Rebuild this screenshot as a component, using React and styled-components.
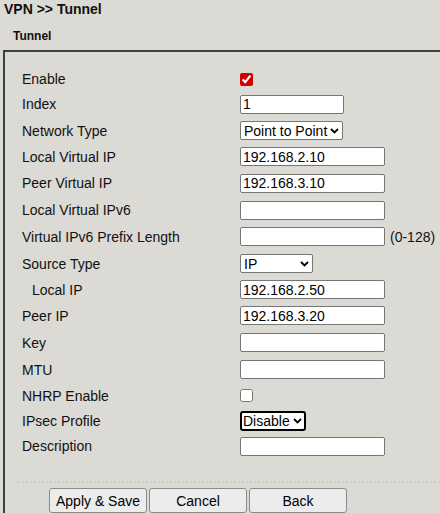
import React from 'react';
import styled, { createGlobalStyle } from 'styled-components';

const GlobalStyle = createGlobalStyle`
  html, body {
    margin: 0;
    padding: 0;
    background: #dcdad5;
  }
  body {
    font-family: "Liberation Sans", Arial, sans-serif;
    font-size: 14px;
    color: #111;
  }
`;

const Page = styled.div`
  width: 440px;
  height: 513px;
  overflow: hidden;
  background: #dcdad5;
`;

const Crumb = styled.div`
  font-weight: bold;
  font-size: 14px;
  padding: 1px 0 0 4px;
  height: 25px;
`;

const SectionTitle = styled.div`
  font-weight: bold;
  font-size: 12px;
  padding-left: 13px;
  height: 24px;
  line-height: 21px;
`;

const Panel = styled.div`
  margin-left: 3px;
  border-top: 2px solid #3f3f3f;
  border-left: 2px solid #3f3f3f;
  padding: 15px 0 0 17px;
  height: 470px;
`;

const Form = styled.div`
  display: flex;
  flex-direction: column;
`;

const Row = styled.div`
  display: grid;
  grid-template-columns: 218px 1fr;
  align-items: center;
  height: ${p => p.h}px;
`;

const Label = styled.div`
  padding-left: ${p => (p.indent ? 10 : 0)}px;
`;

const Field = styled.div`
  display: flex;
  align-items: center;
  gap: 5px;
`;

const TextInput = styled.input`
  box-sizing: border-box;
  width: ${p => p.w || 145}px;
  height: 19px;
  margin: 0;
  padding: 0 2px;
  border: 1px solid #767676;
  border-radius: 2px;
  background: #fff;
  font-family: "Liberation Sans", Arial, sans-serif;
  font-size: 14px;
  color: #000;
`;

const SelectWrap = styled.div`
  position: relative;
  display: inline-flex;
`;

const Select = styled.select`
  appearance: none;
  box-sizing: border-box;
  width: ${p => p.w}px;
  height: ${p => (p.focused ? 20 : 19)}px;
  margin: 0;
  padding: 0 14px 0 ${p => (p.focused ? 1 : 3)}px;
  border: ${p => (p.focused ? '2px solid #000' : '1px solid #767676')};
  border-radius: ${p => (p.focused ? 3 : 2)}px;
  background: #fff;
  font-family: "Liberation Sans", Arial, sans-serif;
  font-size: 14px;
  color: #000;
`;

const Chevron = styled.svg`
  position: absolute;
  right: 4px;
  top: 50%;
  margin-top: -3px;
  width: 9px;
  height: 6px;
  pointer-events: none;
`;

const Dropdown = ({ w, focused, value, options }) => (
  <SelectWrap>
    <Select w={w} focused={focused} defaultValue={value}>
      {options.map(o => (
        <option key={o} value={o}>{o}</option>
      ))}
    </Select>
    <Chevron viewBox="0 0 9 6">
      <path d="M1 1 L4.5 4.5 L8 1" fill="none" stroke="#000" strokeWidth="1.8" />
    </Chevron>
  </SelectWrap>
);

const Check = styled.input`
  width: 13px;
  height: 13px;
  margin: 0;
  accent-color: #d40000;
`;

const Hint = styled.span`
  color: #111;
`;

const Divider = styled.div`
  margin: 22px 0 5px -5px;
  border-top: 2px dotted #cfcdc9;
`;

const Buttons = styled.div`
  display: flex;
  gap: 2px;
  padding-left: 27px;
`;

const Button = styled.button`
  box-sizing: border-box;
  width: 98px;
  height: 25px;
  margin: 0;
  padding: 0;
  white-space: nowrap;
  border: 1px solid #8a8a8a;
  border-radius: 3px;
  background: #ececec;
  font-family: "Liberation Sans", Arial, sans-serif;
  font-size: 14px;
  color: #000;
`;

export default function App() {
  return (
    <Page>
      <GlobalStyle />
      <Crumb>VPN &gt;&gt; Tunnel</Crumb>
      <SectionTitle>Tunnel</SectionTitle>
      <Panel>
        <Form>
          <Row h={24}>
            <Label>Enable</Label>
            <Field><Check type="checkbox" defaultChecked /></Field>
          </Row>
          <Row h={26}>
            <Label>Index</Label>
            <Field><TextInput w={104} defaultValue="1" /></Field>
          </Row>
          <Row h={27}>
            <Label>Network Type</Label>
            <Field>
              <Dropdown w={103} value="Point to Point" options={['Point to Point', 'Point to Multipoint']} />
            </Field>
          </Row>
          <Row h={25}>
            <Label>Local Virtual IP</Label>
            <Field><TextInput defaultValue="192.168.2.10" /></Field>
          </Row>
          <Row h={28}>
            <Label>Peer Virtual IP</Label>
            <Field><TextInput defaultValue="192.168.3.10" /></Field>
          </Row>
          <Row h={26}>
            <Label>Local Virtual IPv6</Label>
            <Field><TextInput /></Field>
          </Row>
          <Row h={27}>
            <Label>Virtual IPv6 Prefix Length</Label>
            <Field><TextInput /><Hint>(0-128)</Hint></Field>
          </Row>
          <Row h={27}>
            <Label>Source Type</Label>
            <Field>
              <Dropdown w={73} value="IP" options={['IP', 'Interface']} />
            </Field>
          </Row>
          <Row h={25}>
            <Label indent>Local IP</Label>
            <Field><TextInput defaultValue="192.168.2.50" /></Field>
          </Row>
          <Row h={27}>
            <Label>Peer IP</Label>
            <Field><TextInput defaultValue="192.168.3.20" /></Field>
          </Row>
          <Row h={27}>
            <Label>Key</Label>
            <Field><TextInput /></Field>
          </Row>
          <Row h={27}>
            <Label>MTU</Label>
            <Field><TextInput /></Field>
          </Row>
          <Row h={25}>
            <Label>NHRP Enable</Label>
            <Field><Check type="checkbox" /></Field>
          </Row>
          <Row h={25}>
            <Label>IPsec Profile</Label>
            <Field>
              <Dropdown w={66} focused value="Disable" options={['Disable']} />
            </Field>
          </Row>
          <Row h={26}>
            <Label>Description</Label>
            <Field><TextInput /></Field>
          </Row>
        </Form>
        <Divider />
        <Buttons>
          <Button>Apply &amp; Save</Button>
          <Button>Cancel</Button>
          <Button>Back</Button>
        </Buttons>
      </Panel>
    </Page>
  );
}
